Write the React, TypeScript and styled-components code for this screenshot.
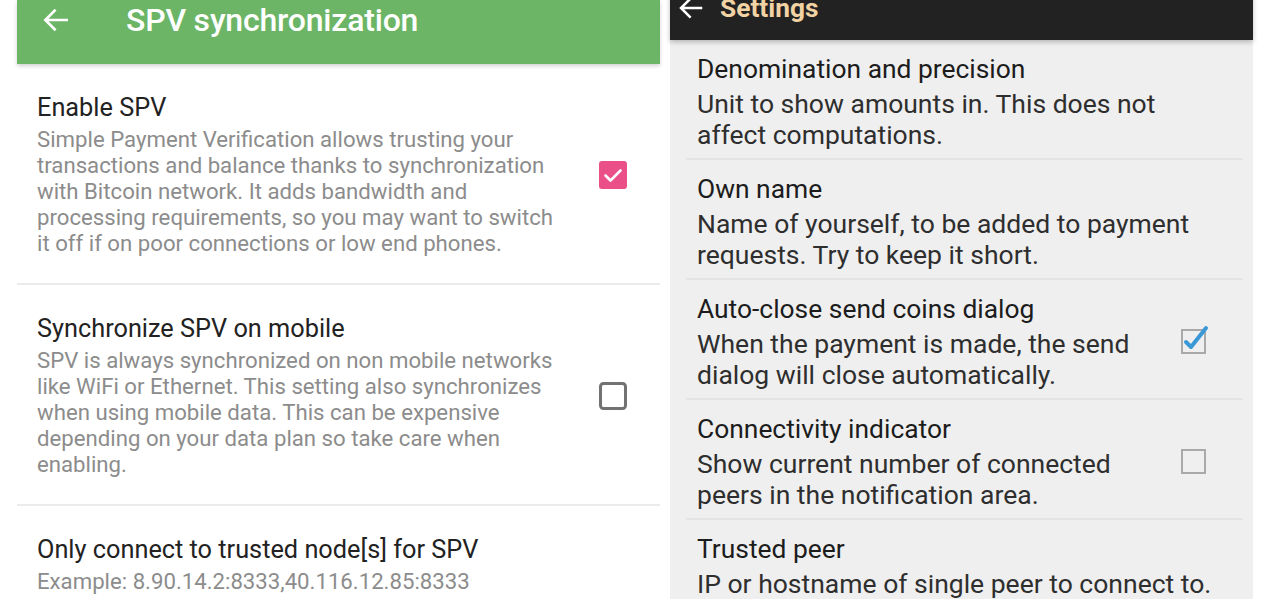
import styled, { createGlobalStyle } from "styled-components";

const Global = createGlobalStyle`
  html, body { margin: 0; padding: 0; background: #fff; }
  body { font-family: Roboto, "Noto Sans", "Liberation Sans", sans-serif; }
`;

type Pref = { title: string; desc: string; check?: "on" | "off" };

const spv: Pref[] = [
  {
    title: "Enable SPV",
    desc: "Simple Payment Verification allows trusting your\ntransactions and balance thanks to synchronization\nwith Bitcoin network. It adds bandwidth and\nprocessing requirements, so you may want to switch\nit off if on poor connections or low end phones.",
    check: "on",
  },
  {
    title: "Synchronize SPV on mobile",
    desc: "SPV is always synchronized on non mobile networks\nlike WiFi or Ethernet. This setting also synchronizes\nwhen using mobile data. This can be expensive\ndepending on your data plan so take care when\nenabling.",
    check: "off",
  },
  {
    title: "Only connect to trusted node[s] for SPV",
    desc: "Example: 8.90.14.2:8333,40.116.12.85:8333",
  },
];

const settings: Pref[] = [
  { title: "Denomination and precision", desc: "Unit to show amounts in. This does not\naffect computations." },
  { title: "Own name", desc: "Name of yourself, to be added to payment\nrequests. Try to keep it short." },
  { title: "Auto-close send coins dialog", desc: "When the payment is made, the send\ndialog will close automatically.", check: "on" },
  { title: "Connectivity indicator", desc: "Show current number of connected\npeers in the notification area.", check: "off" },
  { title: "Trusted peer", desc: "IP or hostname of single peer to connect to." },
];

const Arrow = ({ size }: { size: number }) => (
  <svg width={size} height={size} viewBox="0 0 24 24" fill="none" stroke="#fff" strokeWidth="2" strokeLinecap="square">
    <path d="M20 12H5M11 5l-7 7 7 7" />
  </svg>
);

const PinkBox = ({ on }: { on: boolean }) =>
  on ? (
    <svg width="30" height="30" viewBox="0 0 30 30">
      <rect x="1" y="1" width="28" height="28" rx="3" fill="#ea4f87" />
      <path d="M7.5 15.5l5 5 10-10" fill="none" stroke="#fff" strokeWidth="2.6" strokeLinecap="round" strokeLinejoin="round" />
    </svg>
  ) : (
    <svg width="30" height="30" viewBox="0 0 30 30">
      <rect x="2.5" y="2.5" width="25" height="25" rx="3" fill="none" stroke="#727272" strokeWidth="3" />
    </svg>
  );

const GrayBox = ({ on }: { on: boolean }) => (
  <svg width="25" height="25" viewBox="0 0 25 25" style={{ overflow: "visible" }}>
    <rect x="1" y="1" width="23" height="23" fill="none" stroke="#a9a9a9" strokeWidth="2" />
    {on && (
      <path d="M5 13l5 5 L25 -1" fill="none" stroke="#3b98d6" strokeWidth="4" strokeLinecap="round" strokeLinejoin="round" />
    )}
  </svg>
);

export default function App() {
  return (
    <>
      <Global />
      <Page>
        <LeftPhone>
          <GreenBar>
            <BackBtn>
              <Arrow size={32} />
            </BackBtn>
            <GreenTitle>SPV synchronization</GreenTitle>
          </GreenBar>
          {spv.map((p, i) => (
            <LeftItem key={p.title} last={i === spv.length - 1}>
              <LeftText>
                <LeftTitle>{p.title}</LeftTitle>
                <LeftDesc>{p.desc}</LeftDesc>
              </LeftText>
              {p.check && (
                <LeftCheck>
                  <PinkBox on={p.check === "on"} />
                </LeftCheck>
              )}
            </LeftItem>
          ))}
        </LeftPhone>
        <RightPhone>
          <DarkBar>
            <Arrow size={30} />
            <DarkTitle>Settings</DarkTitle>
          </DarkBar>
          {settings.map((p, i) => (
            <RightItem key={p.title} last={i === settings.length - 1}>
              <RightText>
                <RightTitle>{p.title}</RightTitle>
                <RightDesc>{p.desc}</RightDesc>
              </RightText>
              {p.check && (
                <RightCheck>
                  <GrayBox on={p.check === "on"} />
                </RightCheck>
              )}
            </RightItem>
          ))}
        </RightPhone>
      </Page>
    </>
  );
}

const Page = styled.div`
  width: 1280px;
  height: 599px;
  overflow: hidden;
  display: flex;
  align-items: stretch;
  gap: 10px;
  padding-left: 17px;
  box-sizing: border-box;
  background: #fff;
`;

const LeftPhone = styled.section`
  width: 643px;
  flex: none;
  background: #fff;
  display: flex;
  flex-direction: column;
`;

const GreenBar = styled.header`
  height: 64px;
  flex: none;
  background: #6cb566;
  display: flex;
  align-items: flex-start;
  box-shadow: 0 2px 4px rgba(0, 0, 0, 0.18);
  position: relative;
  z-index: 1;
`;

const BackBtn = styled.div`
  width: 32px;
  height: 40px;
  margin-left: 23px;
  display: flex;
  align-items: center;
`;

const GreenTitle = styled.h1`
  margin: 0 0 0 54px;
  font-size: 32px;
  line-height: 40px;
  font-weight: 500;
  color: #fff;
  letter-spacing: -0.2px;
`;

const LeftItem = styled.div<{ last?: boolean }>`
  display: flex;
  align-items: center;
  padding: 29px 32px 27px 20px;
  border-bottom: ${(p) => (p.last ? "none" : "2px solid #ebebeb")};
`;

const LeftText = styled.div`
  flex: 1;
`;

const LeftTitle = styled.div`
  font-size: 25.3px;
  line-height: 30px;
  color: #222;
`;

const LeftDesc = styled.div`
  margin-top: 3px;
  font-size: 22.2px;
  line-height: 26px;
  color: #8c8c8c;
  white-space: pre;
`;

const LeftCheck = styled.div`
  display: flex;
  margin-left: 12px;
`;

const RightPhone = styled.section`
  width: 583px;
  flex: none;
  background: #efefef;
  display: flex;
  flex-direction: column;
`;

const DarkBar = styled.header`
  flex: none;
  background: #222;
  display: flex;
  align-items: flex-start;
  gap: 14px;
  padding-left: 6px;
  box-shadow: 0 2px 5px rgba(0, 0, 0, 0.25);
  position: relative;
  z-index: 1;
  margin-top: -7px;
  height: 47px;
`;

const DarkTitle = styled.h1`
  margin: 0;
  font-size: 26.3px;
  line-height: 30px;
  font-weight: 700;
  color: #f2d3a4;
`;

const RightItem = styled.div<{ last?: boolean }>`
  display: flex;
  align-items: center;
  margin: 0 10px 0 16px;
  padding: 13px 37px 8px 11px;
  border-bottom: ${(p) => (p.last ? "none" : "2px solid #e4e4e4")};
`;

const RightText = styled.div`
  flex: 1;
  min-width: 0;
`;

const RightTitle = styled.div`
  font-size: 26.4px;
  line-height: 32px;
  color: #1c1c1c;
`;

const RightDesc = styled.div`
  margin-top: 3px;
  font-size: 26.5px;
  line-height: 31px;
  color: #2e2e2e;
  white-space: pre;
`;

const RightCheck = styled.div`
  display: flex;
`;
